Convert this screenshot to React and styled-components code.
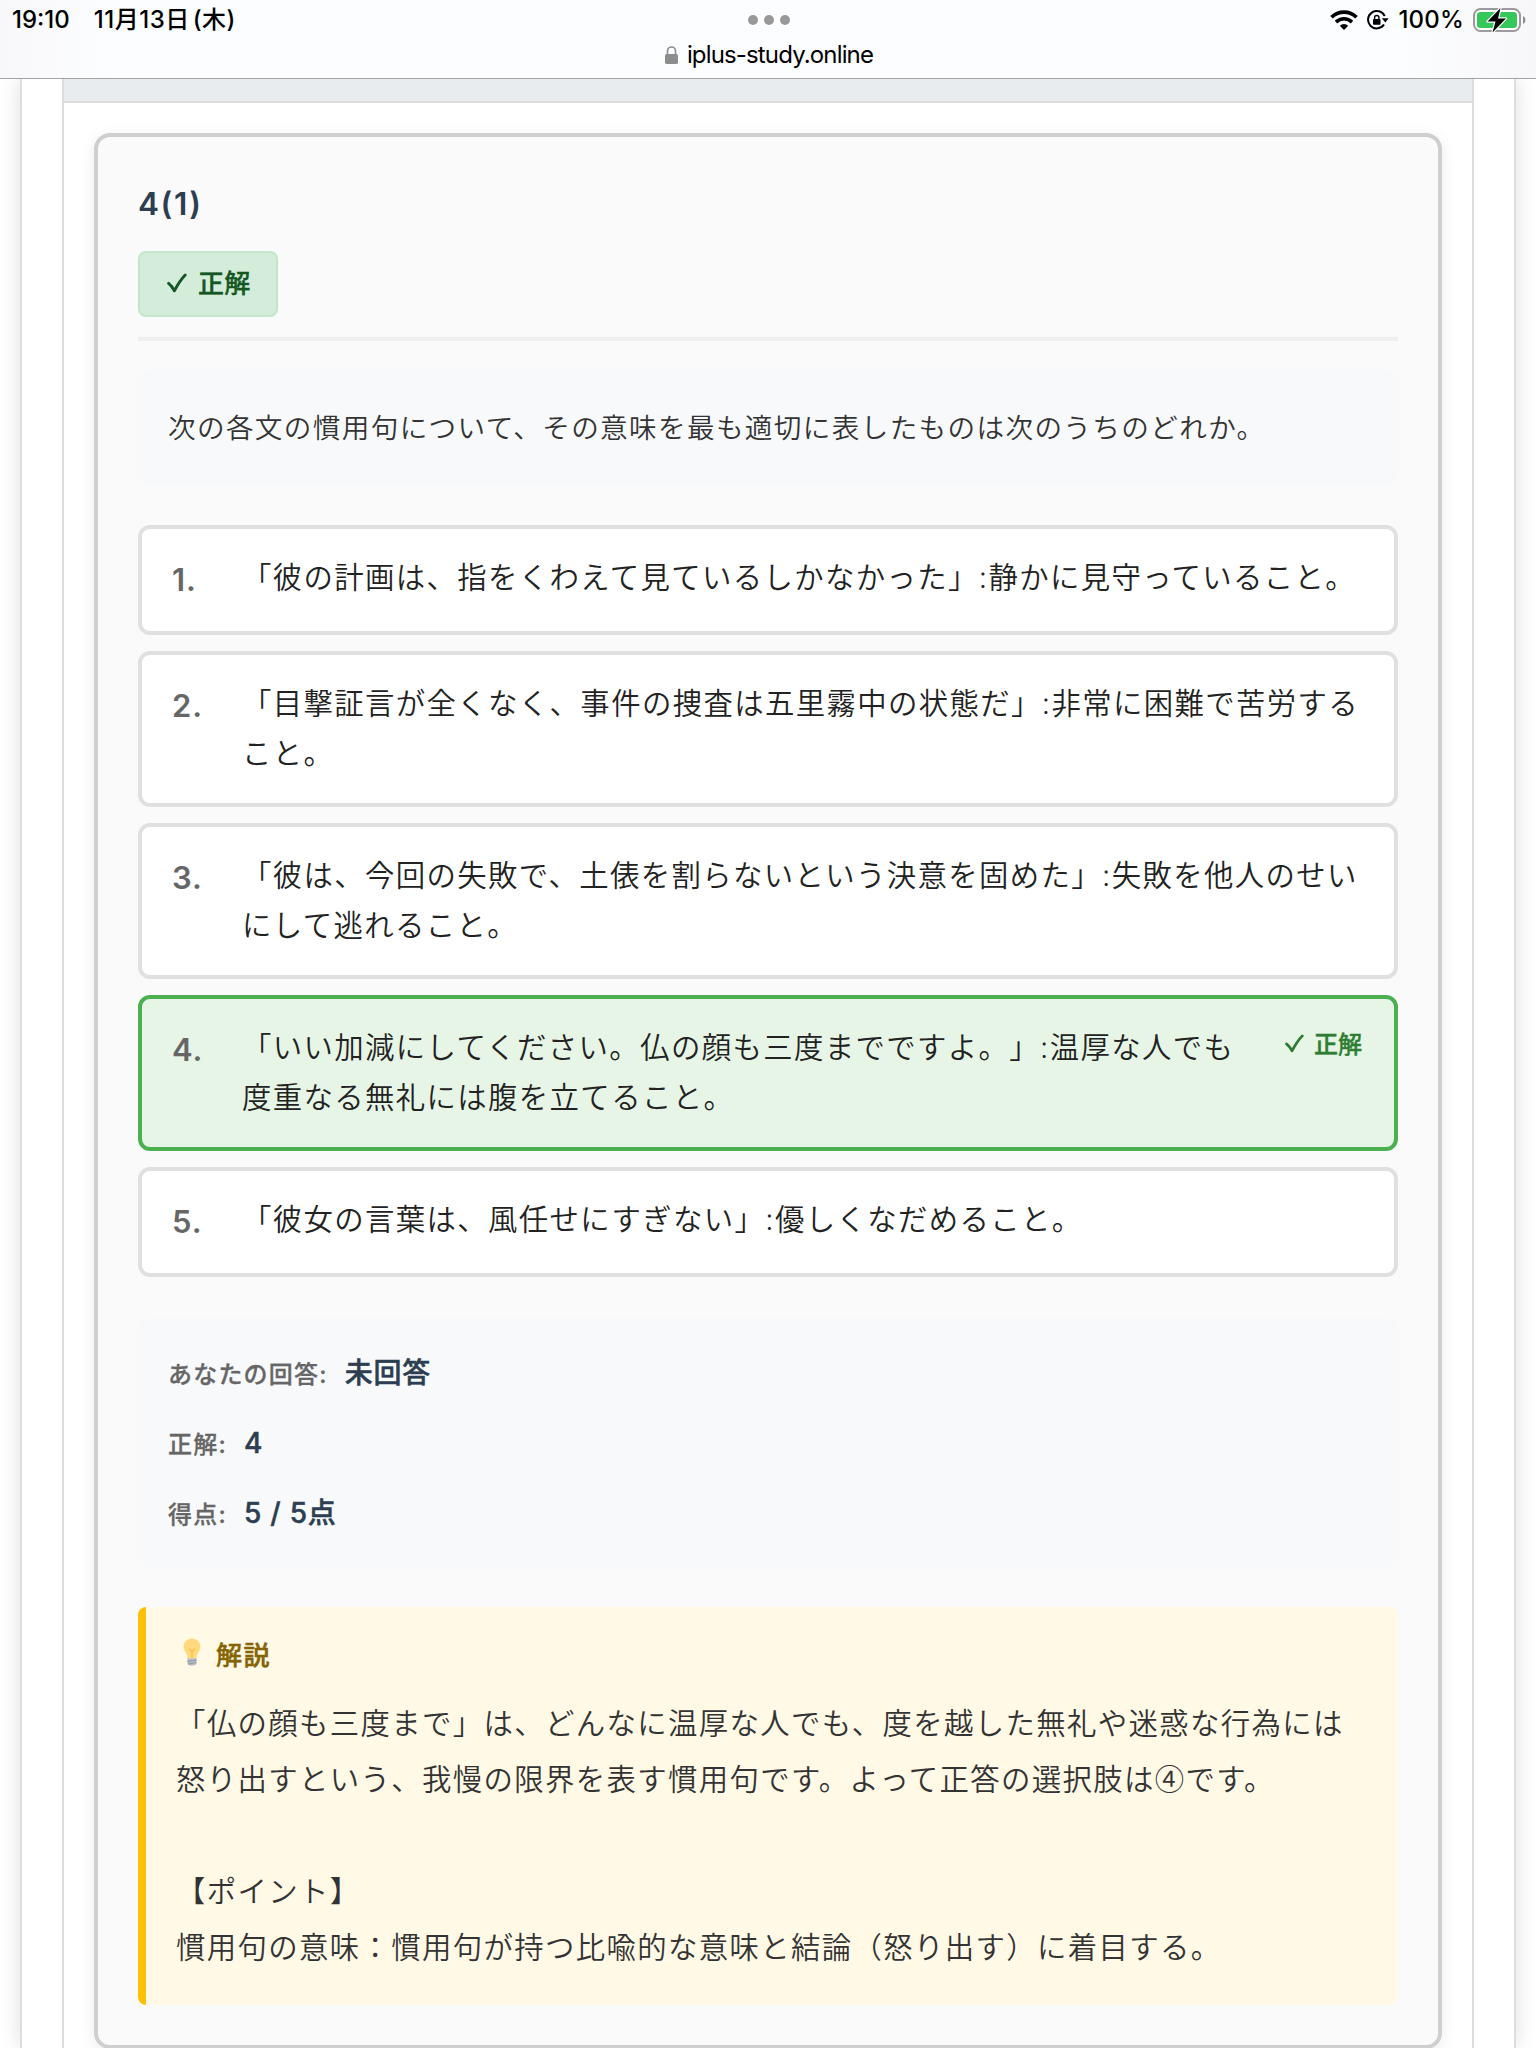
import React from "react"
import styled, { createGlobalStyle } from 'styled-components'


const P = {
	black: '#000',
	ink: '#222',
	body: '#333',
	muted: '#666',
	navy: '#2c3e50',
	line: '#ddd',
	green: '#4caf50',
	greenText: '#2e7d32',
	amber: '#ffc107',
}

const GlobalStyle = createGlobalStyle`
	* {
		box-sizing: border-box;
	}

	body {
		margin: 0;
		background: #fff;
		font-family: Inter, "Noto Sans CJK JP", sans-serif;
		color: ${P.body};
		text-spacing-trim: space-all;
		overflow: hidden;
	}
`

const Page = styled.div`
	width: 1536px;
	height: 2048px;
	overflow: hidden;
	display: flex;
	flex-direction: column;
`

const BrowserBar = styled.header`
	position: relative;
	z-index: 1;
	flex: none;
	height: 79px;
	border-bottom: 1px solid #a2a3a5;
	background: linear-gradient(90deg, #f8f8fa 0, #fcfdfe 110px, #fcfdff 1400px, #f7f7f9 100%);
	color: ${P.black};
`

const StatusRow = styled.div`
	display: grid;
	grid-template-columns: 1fr auto 1fr;
	align-items: center;
	height: 40px;
	padding: 0 10px 0 12px;
	font-size: 24px;
	line-height: 30px;
	font-weight: 500;
`

const Clock = styled.div`
	display: flex;
	align-items: baseline;
	gap: 24px;
	height: 30px;
	white-space: nowrap;
`

const DateText = styled.span`
	font-weight: 450;
	letter-spacing: 0.5px;
	word-spacing: -4px;
`

const Dots = styled.div`
	display: flex;
	gap: 6px;

	span {
		width: 10px;
		height: 10px;
		border-radius: 50%;
		background: #999;
	}
`

const Indicators = styled.div`
	display: flex;
	justify-content: flex-end;
	align-items: center;
	gap: 9px;

	svg {
		display: block;
	}
`

const Percent = styled.span`
	letter-spacing: 0.2px;
`

const AddressRow = styled.div`
	display: flex;
	justify-content: center;
	align-items: center;
	gap: 9px;
	height: 29px;
	padding-left: 2px;
	font-size: 24px;
	line-height: 29px;
	letter-spacing: -0.85px;
`

const Container = styled.main`
	flex: 1;
	min-height: 0;
	margin: 0 20px;
	padding: 0 40px;
	border: solid ${P.line};
	border-width: 0 2px;
	box-shadow: 0 0 20px rgba(0, 0, 0, 0.13);
`

const Section = styled.section`
	height: 100%;
	border: solid ${P.line};
	border-width: 0 2px;
`

const SectionHead = styled.div`
	height: 24px;
	border-bottom: 2px solid ${P.line};
	background: #e8ecef;
`

const Card = styled.article`
	margin: 30px 30px 0;
	height: 1916px;
	padding: 40px;
	border: 4px solid #cfcfcf;
	border-radius: 16px;
	background: #fafafa;
	box-shadow: 0 4px 16px rgba(0, 0, 0, 0.08);
`

const CardHead = styled.div`
	height: 164px;
	border-bottom: 4px solid #eee;
`

const QuestionNo = styled.h3`
	margin: 0;
	padding-top: 4px;
	height: 74px;
	font-size: 31.5px;
	line-height: 46px;
	font-weight: 600;
	letter-spacing: 1.6px;
	color: ${P.navy};
`

const Badge = styled.div`
	display: inline-flex;
	align-items: center;
	gap: 11px;
	width: 140px;
	height: 66px;
	padding: 0 0 5px 27px;
	border: 2px solid #c3e6cb;
	border-radius: 8px;
	background: #d4edda;
	color: #155724;
	font-size: 26px;
	font-weight: 500;
	letter-spacing: 0.3px;
	-webkit-text-stroke: 0.4px;
	white-space: nowrap;

	svg {
		margin-top: 2px;
	}
`

const Prompt = styled.p`
	margin: 29px 0 40px;
	padding: 33px 30px 0;
	height: 115px;
	border-radius: 12px;
	background: #f8f9fb;
	font-size: 27.6px;
	line-height: 50px;
	letter-spacing: 1.36px;
	font-weight: 350;
`

const Options = styled.ol`
	display: flex;
	flex-direction: column;
	gap: 16px;
	margin: 0;
	padding: 0;
	list-style: none;
`

const Option = styled.li`
	display: flex;
	min-height: 110px;
	padding: 24px 28px 24px 30px;
	border: 4px solid ${p => p.$correct ? P.green : '#e0e0e0'};
	border-radius: 12px;
	background: ${p => p.$correct ? '#e7f5e7' : '#fff'};
`

const OptionNo = styled.span`
	flex: none;
	width: 70px;
	font-size: 31px;
	line-height: 54px;
	font-weight: 600;
	letter-spacing: 1px;
	color: ${P.muted};
`

const OptionText = styled.span`
	flex: 1;
	font-size: 29.4px;
	line-height: 50px;
	letter-spacing: 1.37px;
	font-weight: 350;
	color: ${P.ink};
	white-space: pre-line;
`

const OptionMark = styled.span`
	flex: none;
	display: flex;
	align-items: center;
	gap: 10px;
	height: 38px;
	margin-right: 4px;
	font-size: 24px;
	font-weight: 500;
	-webkit-text-stroke: 0.4px;
	color: ${P.greenText};

	svg {
		margin-top: 2px;
	}
`

const Summary = styled.dl`
	display: flex;
	flex-direction: column;
	margin: 40px 0;
	padding: 20px 30px;
	height: 250px;
	border-radius: 12px;
	background: #f8f9fb;
`

const SummaryRow = styled.div`
	display: flex;
	align-items: center;
	gap: 17px;
	height: 70px;
`

const Label = styled.dt`
	font-size: 24px;
	letter-spacing: 1.2px;
	font-weight: 500;
	-webkit-text-stroke: 0.3px;
	color: ${P.muted};
`

const Value = styled.dd`
	margin: 0;
	padding-top: 1px;
	font-size: 28px;
	line-height: 40px;
	letter-spacing: 0.8px;
	font-weight: 500;
	-webkit-text-stroke: 0.5px;
	color: ${P.navy};
`

const Explanation = styled.div`
	height: 398px;
	padding: 28px 30px 0;
	border-left: 8px solid ${P.amber};
	border-radius: 8px;
	background: #fff9e6;
`

const ExplanationTitle = styled.h4`
	display: flex;
	align-items: center;
	gap: 15px;
	margin: 0 0 21px;
	padding-left: 7px;
	height: 37px;
	font-size: 26px;
	letter-spacing: 1.6px;
	font-weight: 500;
	-webkit-text-stroke: 0.5px;
	color: #856404;

	svg {
		margin-top: -3px;
	}
`

const ExplanationBody = styled.p`
	margin: 0;
	font-family: "Noto Sans CJK JP", sans-serif;
	font-size: 29.4px;
	line-height: 56px;
	letter-spacing: 1.36px;
	font-weight: 350;
	white-space: pre-line;
`


const Check = ({ size = 20 }) => (
	<svg width={size} height={size} viewBox="0 0 20 20" fill="none" stroke="currentColor" strokeWidth="2.9" strokeLinecap="round" strokeLinejoin="round">
		<path d="M1.6 10.4C3.6 12 5.6 14.4 7.4 17.8C10.2 12.4 14 6.4 18.2 2" />
	</svg>
)

const Bulb = () => (
	<svg width="18" height="28" viewBox="0 0 19 30">
		<path d="M9.5 0.5C4.3 0.5 0.5 4.5 0.5 9.3c0 5.2 4.3 6.6 4.5 12.5h9c.2-5.9 4.5-7.3 4.5-12.5C18.5 4.5 14.7 0.5 9.5 0.5z" fill="#ffd97c" />
		<path d="M6 11.5l3.5 3.3 3.5-3.3M9.5 14.8V21" fill="none" stroke="#fcbf3d" strokeWidth="1.3" />
		<path d="M4.5 21.800h10v5.200c0 1-2 2.600-5 2.600s-5-1.600-5-2.600z" fill="#bcc0c6" />
		<path d="M4.8 25l9.400-1.500M5.500 28l8.500-1.800" stroke="#8f98a4" strokeWidth="1.2" />
	</svg>
)

const Lock = () => (
	<svg width="13" height="18" viewBox="0 0 13 18">
		<path d="M2.5 9V5a4 4 0 0 1 8 0v4" fill="none" stroke="#8c8c8c" strokeWidth="1.6" />
		<rect x="0" y="8" width="13" height="10" rx="1.8" fill="#8c8c8c" />
	</svg>
)

const Wifi = () => (
	<svg width="28" height="20" viewBox="0 0 28 20" fill="none" stroke="#000" strokeWidth="3.6">
		<path d="M1.5 7.3a17.8 17.8 0 0 1 25 0" />
		<path d="M6 12.1a11.4 11.4 0 0 1 16 0" />
		<path d="M14 20l-4.2-4.2a6 6 0 0 1 8.4 0z" fill="#000" stroke="none" />
	</svg>
)

const RotationLock = () => (
	<svg width="22" height="20" viewBox="0 0 22 20">
		<path d="M17.7 6.2A8.7 8.7 0 1 0 17 14.5" fill="none" stroke="#000" strokeWidth="2" />
		<path d="M14.8 8.2h6.8l-3.2 4.2z" />
		<rect x="6" y="9" width="7.5" height="5.8" rx="0.8" />
		<path d="M7.6 9.5V7.6a2.150 2.150 0 0 1 4.300 0v1.900" fill="none" stroke="#000" strokeWidth="1.4" />
	</svg>
)

const Battery = () => (
	<svg width="53" height="26" viewBox="0 0 53 26">
		<rect x="1" y="2" width="46" height="22" rx="6.5" fill="#fff" stroke="#9b9b9b" strokeWidth="2" />
		<rect x="4" y="5" width="40" height="16" rx="3.5" fill="#34c759" />
		<path d="M50 9c3.2 1.2 3.2 6.8 0 8z" fill="#8f8f8f" />
		<path d="M27.5 1L14.5 14.5h8L19.5 25.5L33 11.5h-8z" fill="#000" stroke="#fff" strokeWidth="2.4" paintOrder="stroke" strokeLinejoin="round" />
	</svg>
)


const options = [
	{ text: '「彼の計画は、指をくわえて見ているしかなかった」:静かに見守っていること。' },
	{ text: '「目撃証言が全くなく、事件の捜査は五里霧中の状態だ」:非常に困難で苦労する\nこと。' },
	{ text: '「彼は、今回の失敗で、土俵を割らないという決意を固めた」:失敗を他人のせい\nにして逃れること。' },
	{ text: '「いい加減にしてください。仏の顔も三度までですよ。」:温厚な人でも\n度重なる無礼には腹を立てること。', correct: true },
	{ text: '「彼女の言葉は、風任せにすぎない」:優しくなだめること。' },
]

const summary = [
	['あなたの回答:', '未回答'],
	['正解:', '4'],
	['得点:', '5 / 5点'],
]

const explanation = `「仏の顔も三度まで」は、どんなに温厚な人でも、度を越した無礼や迷惑な行為には
怒り出すという、我慢の限界を表す慣用句です。よって正答の選択肢は④です。

【ポイント】
慣用句の意味：慣用句が持つ比喩的な意味と結論（怒り出す）に着目する。`


const App = () => (
	<Page lang="ja">
		<GlobalStyle />
		<BrowserBar>
			<StatusRow>
				<Clock>
					<span>19:10</span>
					<DateText>11月13日 (木)</DateText>
				</Clock>
				<Dots><span /><span /><span /></Dots>
				<Indicators>
					<Wifi />
					<RotationLock />
					<Percent>100%</Percent>
					<Battery />
				</Indicators>
			</StatusRow>
			<AddressRow>
				<Lock />
				<span>iplus-study.online</span>
			</AddressRow>
		</BrowserBar>

		<Container>
			<Section>
				<SectionHead />
				<Card>
					<CardHead>
						<QuestionNo>4(1)</QuestionNo>
						<Badge><Check />正解</Badge>
					</CardHead>
					<Prompt>次の各文の慣用句について、その意味を最も適切に表したものは次のうちのどれか。</Prompt>

					<Options>
						{options.map((option, i) => (
							<Option key={i} $correct={option.correct}>
								<OptionNo>{i + 1}.</OptionNo>
								<OptionText>{option.text}</OptionText>
								{option.correct && <OptionMark><Check size={19} />正解</OptionMark>}
							</Option>
						))}
					</Options>

					<Summary>
						{summary.map(([label, value]) => (
							<SummaryRow key={label}>
								<Label>{label}</Label>
								<Value>{value}</Value>
							</SummaryRow>
						))}
					</Summary>

					<Explanation>
						<ExplanationTitle><Bulb />解説</ExplanationTitle>
						<ExplanationBody>{explanation}</ExplanationBody>
					</Explanation>
				</Card>
			</Section>
		</Container>
	</Page>
)


export default App;
